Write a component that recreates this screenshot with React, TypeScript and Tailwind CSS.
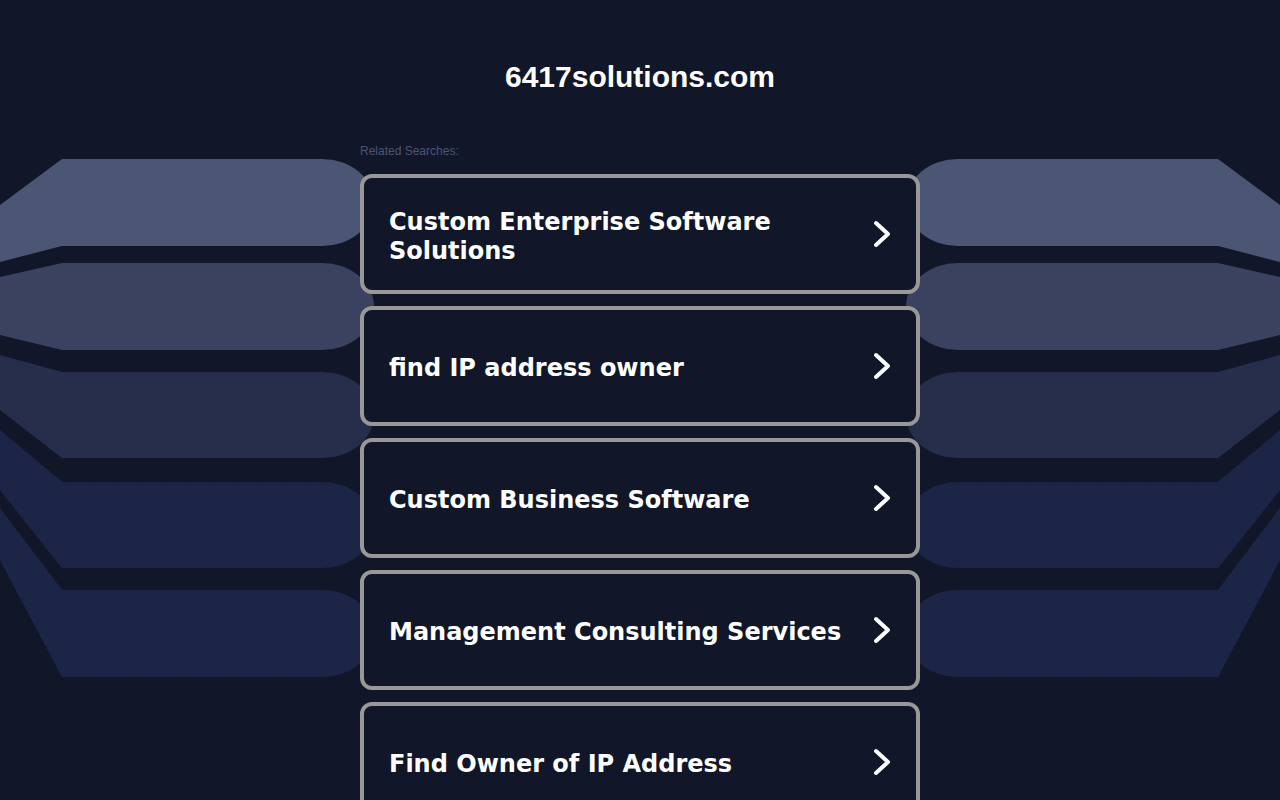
import React from 'react';

const searches = [
  'Custom Enterprise Software Solutions',
  'find IP address owner',
  'Custom Business Software',
  'Management Consulting Services',
  'Find Owner of IP Address',
];

// left-hand bands: y at x=0 (top), flat top, flat bottom, y at x=0 (bottom)
const bands = [
  { t0: 205, t: 159, b: 246, b0: 262, fill: '#4b5574' },
  { t0: 277, t: 263, b: 350, b0: 335, fill: '#3a425f' },
  { t0: 355, t: 372, b: 458, b0: 410, fill: '#262e4c' },
  { t0: 430, t: 482, b: 568, b0: 490, fill: 'url(#dots)' },
  { t0: 508, t: 590, b: 677, b0: 560, fill: 'url(#dots)' },
];

function bandPath(t0: number, t: number, b: number, b0: number, mirror: boolean) {
  const x = (v: number) => (mirror ? 1280 - v : v);
  const ry = (b - t) / 2;
  const sweep = mirror ? 0 : 1;
  return `M ${x(0)} ${t0} L ${x(62)} ${t} L ${x(322)} ${t} A 52 ${ry} 0 0 ${sweep} ${x(322)} ${b} L ${x(62)} ${b} L ${x(0)} ${b0} Z`;
}

function Backdrop() {
  return (
    <svg className="absolute left-0 top-0 w-full h-[800px]" viewBox="0 0 1280 800" preserveAspectRatio="none">
      <defs>
        <pattern id="dots" width="3" height="3" patternUnits="userSpaceOnUse">
          <rect width="3" height="3" fill="#1c2446" />
          <circle cx="1" cy="1" r="0.35" fill="#2a3563" />
        </pattern>
      </defs>
      {bands.map((band, i) => (
        <g key={i}>
          <path d={bandPath(band.t0, band.t, band.b, band.b0, false)} fill={band.fill} />
          <path d={bandPath(band.t0, band.t, band.b, band.b0, true)} fill={band.fill} />
        </g>
      ))}
    </svg>
  );
}

function Chevron() {
  return (
    <svg width="20" height="30" viewBox="0 0 20 30" className="shrink-0 ml-4">
      <polyline points="4,4 16,15 4,26" fill="none" stroke="#ffffff" strokeWidth="4" strokeLinecap="round" strokeLinejoin="round" />
    </svg>
  );
}

export default function App() {
  return (
    <div className="relative min-h-screen overflow-hidden bg-[#111729]">
      <Backdrop />
      <div className="relative mx-auto w-[560px] pt-[59px] pb-10">
        <h1 className="text-center text-[30px] leading-[36px] font-bold text-white font-['Liberation_Sans',Arial,sans-serif]">
          6417solutions.com
        </h1>
        <div className="mt-[49px] text-[12px] leading-[15px] text-[#4c5573] font-['Liberation_Sans',Arial,sans-serif]">
          Related Searches:
        </div>
        <div className="mt-[15px] flex flex-col gap-3">
          {searches.map(s => (
            <a
              key={s}
              href="#"
              className="flex h-[120px] items-center justify-between rounded-[12px] border-4 border-[#989898] bg-[#111729] pl-[25px] pr-[24px]"
            >
              <span className="flex-1 pt-[5px] text-[24px] leading-[29px] font-bold text-white font-['DejaVu_Sans',Verdana,sans-serif]">
                {s}
              </span>
              <Chevron />
            </a>
          ))}
        </div>
      </div>
    </div>
  );
}
